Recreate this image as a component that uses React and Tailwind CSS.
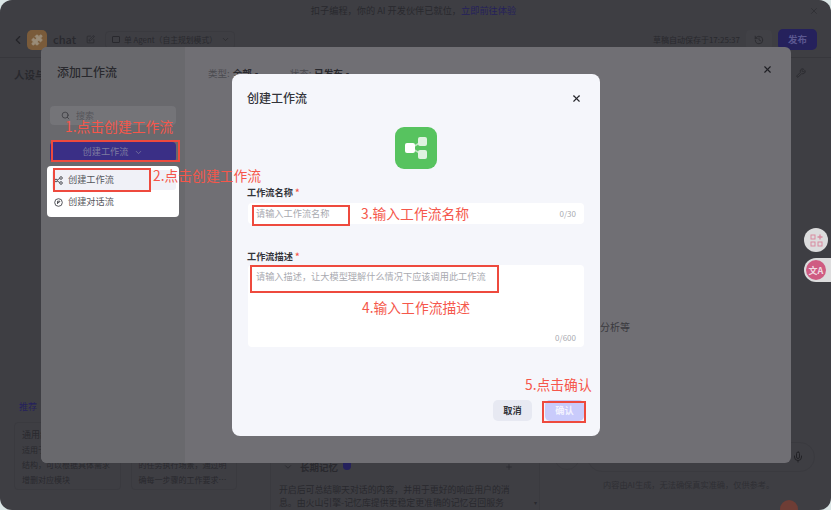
import { ChevronDown, ChevronLeft, History, Mic, Plus, Puzzle, Search, SquarePen, Wrench, X } from "lucide-react";

const font = { fontFamily: '"Noto Sans CJK SC", "Noto Sans", sans-serif' };

function Note({ className, children }) {
    return <div className={"absolute whitespace-nowrap text-[13.8px] leading-[20px] text-[#f5574b] " + className}>{children}</div>;
}

function Box({ className }) {
    return <div className={"absolute border-2 border-[#ee4a3e] " + className}></div>;
}

function FlowLogo() {
    return (
        <svg width="42" height="42" viewBox="0 0 42 42">
            <rect width="42" height="42" rx="9" fill="#57c35f" />
            <path d="M16 21 L28 14 M16 21 L28 28" stroke="#bfe6c2" strokeWidth="1.5" />
            <rect x="10" y="16" width="10" height="10" rx="2" fill="#ffffff" />
            <rect x="23" y="10" width="9" height="9" rx="2" fill="#dff2e0" />
            <rect x="23" y="23" width="9" height="9" rx="2" fill="#dff2e0" />
        </svg>
    );
}

function Background() {
    return (
        <div className="flex h-full flex-col rounded-[12px] bg-[#3e3e43] text-[#29292e]">
            <div className="flex h-[22px] items-center justify-center pr-[4px] text-[9.2px]">
                <span>扣子编程，你的 AI 开发伙伴已就位，</span>
                <span className="text-[#25215c]">立即前往体验</span>
                <X className="absolute right-[12px] top-[6px] h-[10px] w-[10px] text-[#2f2f34]" />
            </div>
            <div className="flex h-[36px] items-center border-b border-[#37373c] pl-[11px] pr-[14px]">
                <ChevronLeft className="h-[14px] w-[14px] text-[#242428]" />
                <div className="ml-[2px] flex h-[20px] w-[20px] items-center justify-center rounded-[5px] bg-[#7a5b3a]">
                    <Puzzle className="h-[12px] w-[12px] text-[#9a8c78]" fill="#9a8c78" />
                </div>
                <span className="ml-[6px] text-[11px] font-medium">chat</span>
                <SquarePen className="ml-[10px] h-[9px] w-[9px] text-[#2b2b30]" />
                <div className="ml-[10px] flex h-[18px] w-[130px] items-center gap-[4px] rounded-[4px] border border-[#3a3a3f] pl-[6px] text-[7.8px]">
                    <span className="h-[7px] w-[8px] rounded-[1px] border border-[#29292e]"></span>
                    <span>单 Agent（自主规划模式）</span>
                    <ChevronDown className="h-[9px] w-[9px]" />
                </div>
                <span className="ml-auto text-[8px]">草稿自动保存于17:25:37</span>
                <div className="ml-[6px] flex h-[20px] w-[26px] items-center justify-center rounded-[4px] bg-[#414146]">
                    <History className="h-[10px] w-[10px]" />
                </div>
                <div className="ml-[6px] flex h-[21px] w-[39px] items-center justify-center rounded-[5px] bg-[#25215c] text-[9.5px] font-semibold text-[#5b5790]">发布</div>
            </div>
            <div className="flex flex-1 overflow-hidden">
                <div className="flex w-[270px] flex-col pl-[14px] pr-[33px] pt-[9px]">
                    <div className="whitespace-nowrap text-[10.5px] font-semibold">人设与回复逻辑</div>
                    <div className="mt-[317px] pl-[5px] text-[9px] text-[#25215c]">推荐</div>
                    <div className="mt-[9px] grid grid-cols-2 gap-[10px]">
                        <div className="h-[68px] rounded-[4px] border border-[#3a3a3f] pl-[7px] pt-[4px] text-[8px] leading-[15px]">
                            <div className="text-[9px]">通用结构</div>
                            <div>适用于简单的任务</div>
                            <div className="whitespace-nowrap">结构，可以根据具体需求</div>
                            <div>增删对应模块</div>
                        </div>
                        <div className="h-[68px] rounded-[4px] border border-[#3a3a3f] pl-[7px] pt-[4px] text-[8px] leading-[15px]">
                            <div className="text-[9px]">任务执行</div>
                            <div>适用于有明确工作步骤</div>
                            <div className="whitespace-nowrap">的任务执行场景，通过明</div>
                            <div className="whitespace-nowrap">确每一步骤的工作要求…</div>
                        </div>
                    </div>
                </div>
                <div className="relative flex w-[270px] flex-col justify-end border-x border-[#3a3a3f] pl-[8px] pr-[20px]">
                    <div className="flex items-center pl-[4px] text-[9.5px] font-semibold">
                        <ChevronDown className="h-[10px] w-[10px]" />
                        <span className="ml-[7px]">长期记忆</span>
                        <span className="ml-[5px] h-[7px] w-[8px] rounded-b-full bg-[#25215c]"></span>
                        <Plus className="ml-auto mr-[6px] h-[8px] w-[8px]" />
                    </div>
                    <div className="mt-[9px] h-[27px] overflow-hidden text-[8.9px] leading-[13px]">
                        开启后可总结聊天对话的内容，并用于更好的响应用户的消息。由火山引擎-记忆库提供更稳定更准确的记忆召回服务
                    </div>
                    <span className="absolute bottom-[3px] right-[2px] text-[6px]">▾</span>
                </div>
                <div className="flex flex-1 flex-col justify-end pb-[20px] pl-[14px]">
                    <div className="flex items-center gap-[7px]">
                        <div className="h-[26px] w-[26px] rounded-full border border-[#3a3a3f]"></div>
                        <div className="flex h-[30px] w-[228px] items-center justify-end rounded-full border border-[#3a3a3f] pr-[10px]">
                            <Mic className="h-[12px] w-[12px] text-[#222226]" />
                        </div>
                    </div>
                    <div className="ml-[49px] mt-[6px] text-[8.2px] text-[#2f2f34]">内容由AI生成，无法确保真实准确，仅供参考。</div>
                </div>
            </div>
        </div>
    );
}

function AddWorkflowModal() {
    return (
        <div className="absolute left-[41px] top-[47px] flex h-[416px] w-[750px] overflow-hidden rounded-[6px] bg-[#706f74] text-[#29292e]">
            <div className="flex w-[144px] flex-col bg-[#69696d] pl-[9px] pr-[9px]">
                <div className="mt-[16px] pl-[7px] text-[12px] font-medium leading-[18px]">添加工作流</div>
                <div className="mt-[25px] flex h-[19px] items-center gap-[6px] rounded-[4px] bg-[#747478] pl-[11px] text-[9px] text-[#55555a]">
                    <Search className="h-[9px] w-[9px] text-[#38383d]" />
                    <span>搜索</span>
                </div>
                <div className="mt-[17px] flex h-[20px] items-center justify-center gap-[6px] rounded-[4px] bg-[#3a2f86] text-[9.2px] text-[#7f7ca0]">
                    <span>创建工作流</span>
                    <ChevronDown className="h-[9px] w-[9px]" />
                </div>
            </div>
            <div className="flex flex-1 flex-col pl-[23px] pr-[18px] pt-[19px]">
                <div className="flex items-center text-[9.5px]">
                    <span className="text-[#4b4b50]">类型:</span>
                    <span className="ml-[3px] font-semibold">全部</span>
                    <span className="ml-[3px] text-[6px]">▾</span>
                    <span className="ml-[32px] text-[#4b4b50]">状态:</span>
                    <span className="ml-[3px] font-semibold">已发布</span>
                    <span className="ml-[3px] text-[6px]">▾</span>
                    <X className="ml-auto mt-[-8px] h-[11px] w-[11px] text-[#1f1f24]" strokeWidth={2.5} />
                </div>
                <div className="mt-[239px] whitespace-nowrap pl-[392px] text-[10px] text-[#3a3a3f]">分析等</div>
            </div>
        </div>
    );
}

function FlowMenu() {
    return (
        <div className="absolute left-[47px] top-[166px] flex h-[51px] w-[132px] flex-col gap-[2px] rounded-[4px] bg-white px-[5px] pt-[4px] text-[9.2px] text-[#55565c]">
            <div className="flex h-[20px] w-[124px] items-center gap-[5px] rounded-[3px] bg-[#f0f1f7] pl-[2px]">
                <svg width="9" height="9" viewBox="0 0 9 9" fill="none" stroke="#44454b" strokeWidth="0.9">
                    <circle cx="2" cy="4.5" r="1.3" /><circle cx="7" cy="2" r="1.3" /><circle cx="7" cy="7" r="1.3" />
                    <path d="M3.2 4 L5.8 2.5 M3.2 5 L5.8 6.5" />
                </svg>
                <span>创建工作流</span>
            </div>
            <div className="flex h-[20px] items-center gap-[5px] pl-[2px]">
                <svg width="9" height="9" viewBox="0 0 9 9" fill="none" stroke="#44454b" strokeWidth="0.9">
                    <circle cx="4.5" cy="4.5" r="3.8" /><path d="M3.5 6 V3.2 H6 L5 4.6 H3.5" />
                </svg>
                <span>创建对话流</span>
            </div>
        </div>
    );
}

function CreateWorkflowDialog() {
    return (
        <div className="absolute left-[232px] top-[74px] flex h-[362px] w-[368px] flex-col rounded-[8px] bg-[#f5f6fb] px-[16px] text-[#33343a]">
            <div className="mt-[15px] flex h-[18px] items-center justify-between">
                <span className="ml-[-1px] text-[12px] font-medium">创建工作流</span>
                <X className="mr-[2px] h-[11px] w-[11px] text-[#26272c]" strokeWidth={2.5} />
            </div>
            <div className="mt-[20px] flex justify-center">
                <FlowLogo />
            </div>
            <div className="ml-[-1px] mt-[16px] text-[9.2px] font-semibold leading-[14px]">
                工作流名称 <span className="text-[#f5574b]">*</span>
            </div>
            <div className="mt-[4px] flex h-[21px] items-center justify-between rounded-[4px] bg-white pl-[8px] pr-[8px] text-[9.2px] text-[#a9aab0]">
                <span>请输入工作流名称</span>
                <span className="text-[8px]">0/30</span>
            </div>
            <div className="ml-[-1px] mt-[25px] text-[9.2px] font-semibold leading-[14px]">
                工作流描述 <span className="text-[#f5574b]">*</span>
            </div>
            <div className="mt-[2px] flex h-[82px] flex-col justify-between rounded-[4px] bg-white px-[8px] pb-[3px] pt-[5px] text-[9.2px] text-[#a9aab0]">
                <span>请输入描述，让大模型理解什么情况下应该调用此工作流</span>
                <span className="self-end text-[8px]">0/600</span>
            </div>
            <div className="mt-[53px] flex justify-end gap-[13px]">
                <div className="flex h-[21px] w-[39px] items-center justify-center rounded-[5px] bg-[#e7e9f2] text-[9.2px] font-semibold">取消</div>
                <div className="flex h-[21px] w-[39px] items-center justify-center rounded-[5px] bg-[#c9cbfb] text-[9.2px] font-semibold text-[#f3f3ff]">确认</div>
            </div>
        </div>
    );
}

function App() {
    return (
        <div className="relative h-[510px] w-[831px] overflow-hidden bg-[#dbe6e6]" style={font}>
            <Background />
            <AddWorkflowModal />
            <Wrench className="absolute left-[796px] top-[68px] h-[10px] w-[10px] text-[#29292e]" />
            <div className="absolute left-[804px] top-[228px] flex h-[24px] w-[24px] items-center justify-center rounded-full bg-[#dcdcdd]">
                <svg width="13" height="13" viewBox="0 0 13 13" fill="none" stroke="#d98aa0" strokeWidth="1">
                    <rect x="1" y="1" width="4" height="4" /><rect x="1" y="8" width="4" height="4" /><rect x="8" y="8" width="4" height="4" />
                    <path d="M10 0.5 V5.5 M7.5 3 H12.5" strokeWidth="1.3" />
                </svg>
            </div>
            <div className="absolute left-[804px] top-[258px] flex h-[24px] w-[27px] items-center rounded-l-full bg-[#dcdcdd] pl-[2px]">
                <div className="flex h-[20px] w-[20px] items-center justify-center rounded-full bg-[#cf5c82] text-[9px] font-bold leading-none text-[#f0dbe2]">文A</div>
            </div>
            <div className="absolute bottom-[-8px] left-[780px] h-[18px] w-[18px] rounded-full bg-[#6e3d35]"></div>
            <FlowMenu />
            <CreateWorkflowDialog />

            <Box className="left-[51px] top-[140px] h-[22px] w-[129px]" />
            <Box className="left-[53px] top-[168px] h-[24px] w-[98px]" />
            <Box className="left-[252px] top-[205px] h-[21px] w-[98px]" />
            <Box className="left-[250px] top-[265px] h-[28px] w-[249px]" />
            <Box className="left-[542px] top-[401px] h-[22px] w-[44px]" />

            <Note className="left-[65px] top-[116px]">1.点击创建工作流</Note>
            <Note className="left-[153px] top-[165px]">2.点击创建工作流</Note>
            <Note className="left-[361px] top-[203px]">3.输入工作流名称</Note>
            <Note className="left-[362px] top-[297px]">4.输入工作流描述</Note>
            <Note className="left-[525px] top-[374px]">5.点击确认</Note>
        </div>
    );
}

export default App;
